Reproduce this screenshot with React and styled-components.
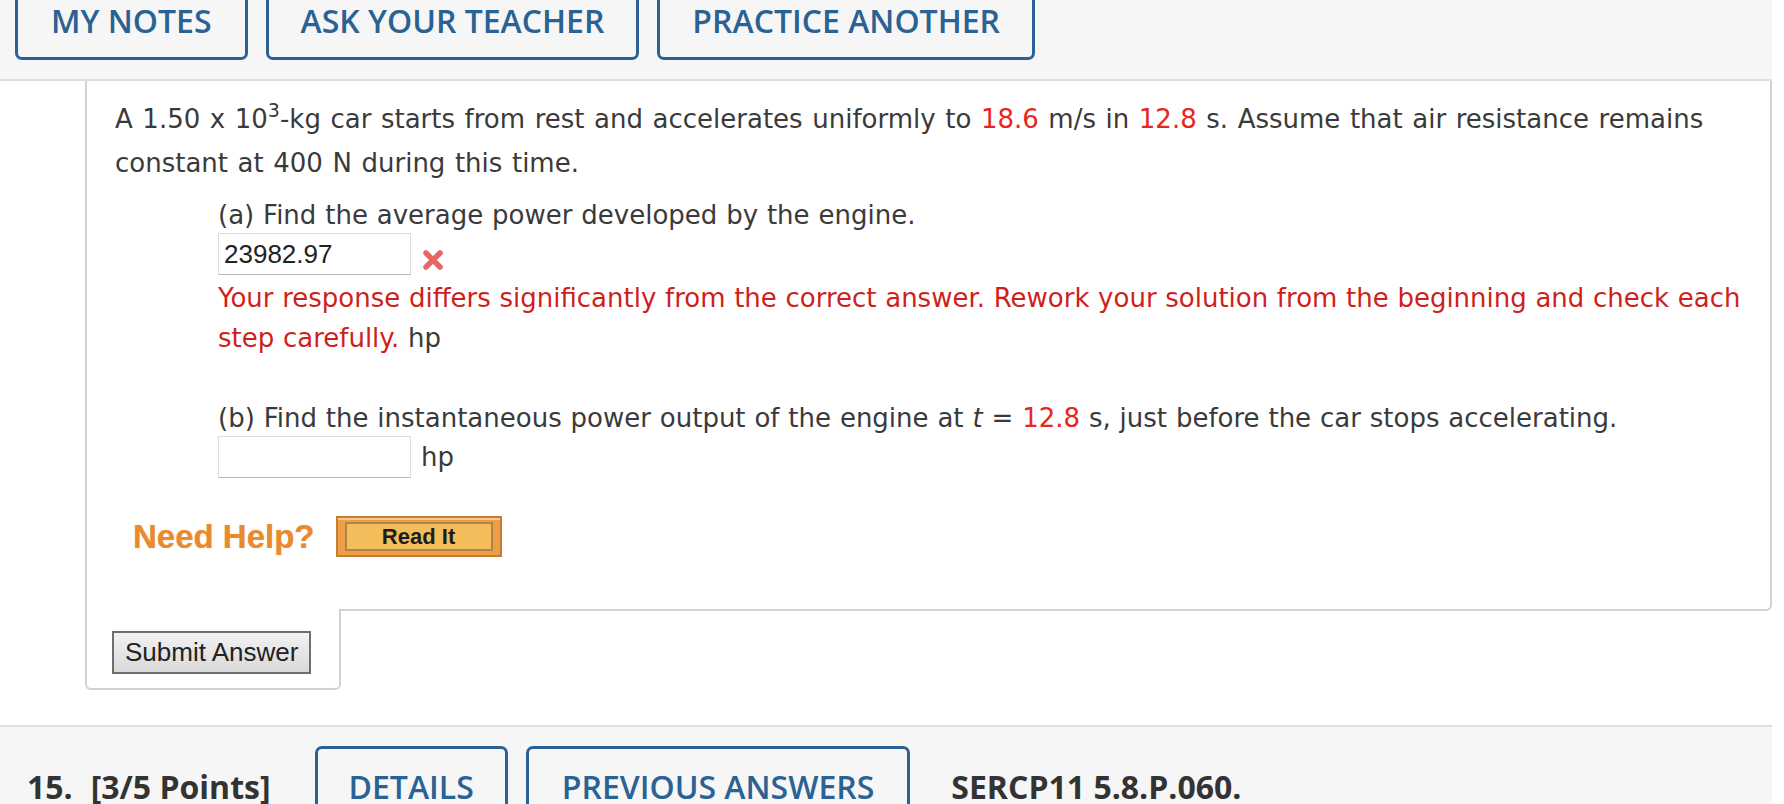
import React from 'react';
import styled, { createGlobalStyle } from 'styled-components';

const GlobalStyle = createGlobalStyle`
  body {
    margin: 0;
    background: #fff;
    overflow: hidden;
  }
`;

const Page = styled.div`
  margin-top: -39px;
  padding-right: 12px;
  font-family: "DejaVu Sans", Verdana, sans-serif;
  color: #3a3a3a;
`;

const QuestionBar = styled.div`
  display: flex;
  align-items: baseline;
  gap: 18px;
  padding: 19px 0 19px ${(p) => p.$indent}px;
  background: #f6f6f6;
  border-top: ${(p) => (p.$bottom ? '2px solid #dedede' : 'none')};
  border-bottom: ${(p) => (p.$bottom ? 'none' : '2px solid #dedede')};
`;

const BarButton = styled.button`
  font-family: "Open Sans", sans-serif;
  font-weight: 600;
  font-size: 32px;
  line-height: 40px;
  color: #2a6293;
  background: transparent;
  border: 3px solid #2b6196;
  border-radius: 7px;
  padding: 18px ${(p) => p.$pad || 32}px 16px;
  margin: 0;
  white-space: nowrap;
`;

const BarLabel = styled.span`
  font-family: "Open Sans", sans-serif;
  font-weight: 700;
  font-size: 32px;
  color: #333;
  margin-right: ${(p) => p.$after || 0}px;
  margin-left: ${(p) => p.$before || 0}px;
`;

const QuestionBody = styled.div`
  margin-left: 85px;
  border: 2px solid #d2d2d2;
  border-top: none;
  border-bottom-right-radius: 6px;
  padding: 16px 20px 52px 28px;
  font-size: 26px;
`;

const Prompt = styled.p`
  margin: 0;
  line-height: 44px;
  word-spacing: 1.3px;

  sup {
    font-size: 19px;
    line-height: 0;
    vertical-align: 11px;
  }
`;

const Given = styled.span`
  color: #e8261d;
`;

const Part = styled.div`
  margin: ${(p) => p.$gap}px 0 0 103px;
`;

const PartLabel = styled.div`
  line-height: 36px;
  word-spacing: 0.6px;

  i {
    font-style: italic;
  }
`;

const AnswerRow = styled.div`
  display: flex;
  align-items: center;
  gap: 10px;
  line-height: 40px;
`;

const AnswerInput = styled.input`
  box-sizing: border-box;
  width: 193px;
  height: 42px;
  padding: 0 5px;
  font-family: "Liberation Sans", Arial, sans-serif;
  font-size: 26px;
  color: #222;
  border: 1px solid #dcdcdc;
  border-bottom-color: #b8b8b8;
  background: #fff;
  outline: none;
`;

const WrongMark = styled.svg`
  width: 24px;
  height: 24px;
  margin-top: 12px;
`;

const Feedback = styled.div`
  margin-top: 3px;
  line-height: 40px;
  word-spacing: 0.4px;
`;

const ErrorText = styled.span`
  color: #cf1f1a;
`;

const HelpRow = styled.div`
  display: flex;
  align-items: center;
  gap: 21px;
  margin: 38px 0 0 18px;
`;

const HelpTitle = styled.span`
  font-family: "Liberation Sans", Arial, sans-serif;
  font-weight: 700;
  font-size: 33px;
  color: #e88a2e;
  text-shadow: 0 0 1px rgba(232, 138, 46, 0.6);
`;

const ReadItButton = styled.button`
  box-sizing: border-box;
  width: 166px;
  height: 41px;
  padding: 4px 7px;
  border: 2px solid #c27c33;
  background: #ee9f45;
  box-shadow: inset 0 2px 0 #f7c98a;
  display: flex;
  margin: 0;
`;

const ReadItFace = styled.span`
  flex: 1;
  display: flex;
  align-items: center;
  justify-content: center;
  border: 2px solid #b0844f;
  background: #f3bd5c;
  font-family: "Liberation Sans", Arial, sans-serif;
  font-weight: 700;
  font-size: 22px;
  color: #1d1d1d;
`;

const SubmitTab = styled.div`
  box-sizing: border-box;
  width: 256px;
  margin: -2px 0 0 85px;
  padding: 22px 0 14px 25px;
  border: 2px solid #d2d2d2;
  border-top: none;
  border-radius: 0 0 6px 6px;
  background: #fff;
`;

const SubmitButton = styled.button`
  height: 43px;
  margin: 0;
  padding: 0 11px;
  font-family: "Liberation Sans", Arial, sans-serif;
  font-size: 26px;
  color: #222;
  border: 2px solid #6e6e6e;
  border-radius: 0;
  background: linear-gradient(#f2f2f2, #d9d9d9);
`;

const Spacer = styled.div`
  height: 35px;
`;

const App = () => {
  return (
    <Page>
      <GlobalStyle />
      <QuestionBar $indent={15}>
        <BarButton $pad={33}>MY NOTES</BarButton>
        <BarButton>ASK YOUR TEACHER</BarButton>
        <BarButton>PRACTICE ANOTHER</BarButton>
      </QuestionBar>

      <QuestionBody>
        <Prompt>
          A 1.50 x 10<sup>3</sup>-kg car starts from rest and accelerates uniformly to{' '}
          <Given>18.6</Given> m/s in <Given>12.8</Given> s. Assume that air resistance
          remains constant at 400 N during this time.
        </Prompt>

        <Part $gap={12}>
          <PartLabel>(a) Find the average power developed by the engine.</PartLabel>
          <AnswerRow>
            <AnswerInput defaultValue="23982.97" />
            <WrongMark viewBox="0 0 24 24">
              <path
                d="M5 5 L19 19 M19 5 L5 19"
                stroke="#e55757"
                strokeWidth="5.5"
                strokeLinecap="round"
                opacity="0.9"
              />
            </WrongMark>
          </AnswerRow>
          <Feedback>
            <ErrorText>
              Your response differs significantly from the correct answer. Rework your
              solution from the beginning and check each step carefully.
            </ErrorText>{' '}
            hp
          </Feedback>
        </Part>

        <Part $gap={42}>
          <PartLabel>
            (b) Find the instantaneous power output of the engine at <i>t</i> ={' '}
            <Given>12.8</Given> s, just before the car stops accelerating.
          </PartLabel>
          <AnswerRow>
            <AnswerInput />
            <span>hp</span>
          </AnswerRow>
        </Part>

        <HelpRow>
          <HelpTitle>Need Help?</HelpTitle>
          <ReadItButton>
            <ReadItFace>Read It</ReadItFace>
          </ReadItButton>
        </HelpRow>
      </QuestionBody>

      <SubmitTab>
        <SubmitButton>Submit Answer</SubmitButton>
      </SubmitTab>

      <Spacer />

      <QuestionBar $indent={27} $bottom>
        <BarLabel>15.</BarLabel>
        <BarLabel $after={26}>[3/5 Points]</BarLabel>
        <BarButton $pad={31}>DETAILS</BarButton>
        <BarButton $pad={33}>PREVIOUS ANSWERS</BarButton>
        <BarLabel $before={23}>SERCP11 5.8.P.060.</BarLabel>
      </QuestionBar>
    </Page>
  );
};

export default App;
